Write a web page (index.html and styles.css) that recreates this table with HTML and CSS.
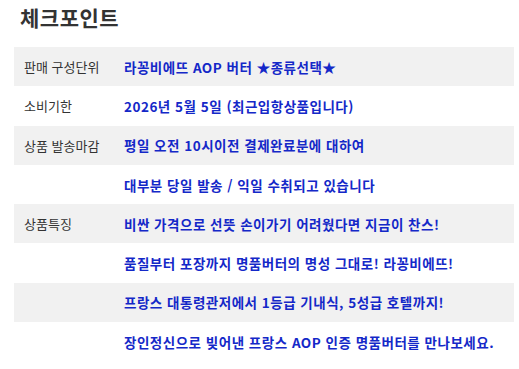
FILE: index.html
```html
<!DOCTYPE html>
<html lang="ko">
<head>
<meta charset="utf-8">
<link rel="stylesheet" href="styles.css">
</head>
<body>
<div class="page">
  <h2 class="title">체크포인트</h2>
  <div class="table">
    <div class="row gray"><div class="label">판매 구성단위</div><div class="value">라꽁비에뜨 AOP 버터 ★종류선택★</div></div>
    <div class="row"><div class="label">소비기한</div><div class="value">2026년 5월 5일 (최근입항상품입니다)</div></div>
    <div class="row gray"><div class="label">상품 발송마감</div><div class="value">평일 오전 10시이전 결제완료분에 대하여</div></div>
    <div class="row"><div class="label"></div><div class="value">대부분 당일 발송 / 익일 수취되고 있습니다</div></div>
    <div class="row gray"><div class="label">상품특징</div><div class="value">비싼 가격으로 선뜻 손이가기 어려웠다면 지금이 찬스!</div></div>
    <div class="row"><div class="label"></div><div class="value">품질부터 포장까지 명품버터의 명성 그대로! 라꽁비에뜨!</div></div>
    <div class="row gray"><div class="label"></div><div class="value">프랑스 대통령관저에서 1등급 기내식, 5성급 호텔까지!</div></div>
    <div class="row"><div class="label"></div><div class="value">장인정신으로 빚어낸 프랑스 AOP 인증 명품버터를 만나보세요.</div></div>
  </div>
</div>
</body>
</html>
```
FILE: styles.css
```css
html, body {
  margin: 0;
  padding: 0;
  background: #fff;
}
.page {
  padding: 0 5px 0 14px;
  font-family: "Noto Sans CJK KR", "Noto Sans", sans-serif;
}
.title {
  margin: 3px 0 0 6px;
  font-size: 21px;
  letter-spacing: 0.5px;
  line-height: 28px;
  font-weight: 700;
  color: #333;
  height: 44px;
}
.table {
  display: flex;
  flex-direction: column;
}
.row {
  display: flex;
  align-items: center;
  height: 39.3px;
}
.row.gray {
  background: #f1f1f1;
}
.label {
  width: 100px;
  padding-left: 10px;
  font-size: 13px;
  color: #333;
}
.value {
  font-size: 13.5px;
  letter-spacing: 0.5px;
  font-weight: 700;
  color: #1428c8;
}
```
